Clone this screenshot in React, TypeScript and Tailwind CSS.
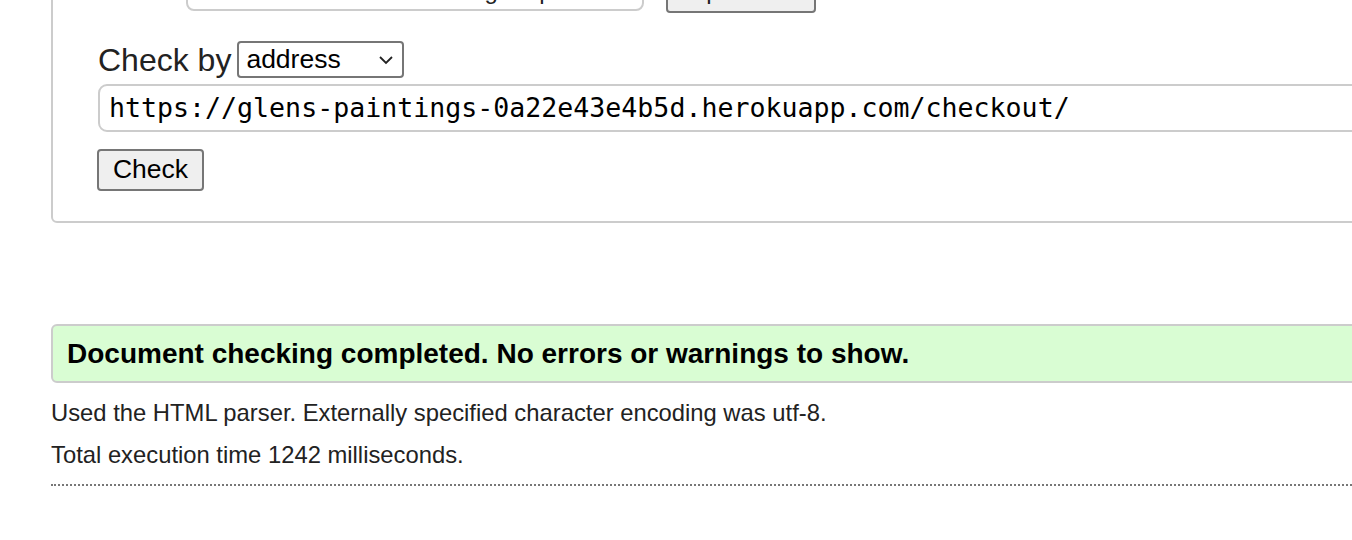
import React from "react";

export default function App() {
  return (
    <div className="w-[1352px] h-[540px] overflow-hidden bg-white text-[#222] font-['Liberation_Sans',Arial,sans-serif]">
      <div className="w-[1500px] pl-[51px] -mt-[44px]">
        <fieldset className="border-2 border-[#cccccc] rounded-[6px] pl-[45px] pt-[12px] pb-[30px]">
          <div className="flex items-center h-[42px]">
            <span className="text-[26px] w-[88px]">Show</span>
            <div className="flex items-center gap-6 h-[40px] w-[458px] border-2 border-[#cccccc] rounded-[8px] px-4 text-[24px]">
              <label className="flex items-center gap-1"><input type="checkbox" />source</label>
              <label className="flex items-center gap-1"><input type="checkbox" />outline</label>
              <label className="flex items-center gap-1"><input type="checkbox" />image report</label>
            </div>
            <button className="ml-[22px] h-[43px] w-[150px] border-2 border-[#767676] rounded-[4px] bg-[#efefef] text-[24px]">Options…</button>
          </div>
          <div className="flex items-end mt-[29px]">
            <span className="text-[32px] leading-[36px] mr-[6px]">Check by</span>
            <div className="relative w-[167px] h-[37px] border-2 border-[#767676] rounded-[4px] flex items-center pl-[7px] text-[26.5px] text-black">
              address
              <svg className="absolute right-[8px] top-[11px]" width="16" height="12" viewBox="0 0 16 12" fill="none">
                <path d="M2 3 L8 9 L14 3" stroke="#222" strokeWidth="1.8" />
              </svg>
            </div>
          </div>
          <div className="mt-[6px] h-[48px] border-2 border-[#cccccc] rounded-[9px] flex items-center pl-[9px] text-[26.6px] text-black font-['DejaVu_Sans_Mono',monospace]">
            https://glens-paintings-0a22e43e4b5d.herokuapp.com/checkout/
          </div>
          <button className="mt-[17px] -ml-px w-[107px] h-[42px] border-2 border-[#767676] rounded-[4px] bg-[#efefef] text-[26.5px] text-black flex items-center justify-center">
            Check
          </button>
        </fieldset>
        <div className="mt-[101px] h-[59px] border-2 border-[#cccccc] rounded-[6px] bg-[#d9fdd3] flex items-center pl-[14px] text-[28px] font-bold text-black">
          Document checking completed. No errors or warnings to show.
        </div>
        <p className="mt-[16px] text-[23.8px] leading-[28px]">Used the HTML parser. Externally specified character encoding was utf-8.</p>
        <p className="mt-[14px] text-[23.8px] leading-[28px]">Total execution time 1242 milliseconds.</p>
        <div className="mt-[15px] border-t-2 border-dotted border-[#777]"></div>
      </div>
    </div>
  );
}
